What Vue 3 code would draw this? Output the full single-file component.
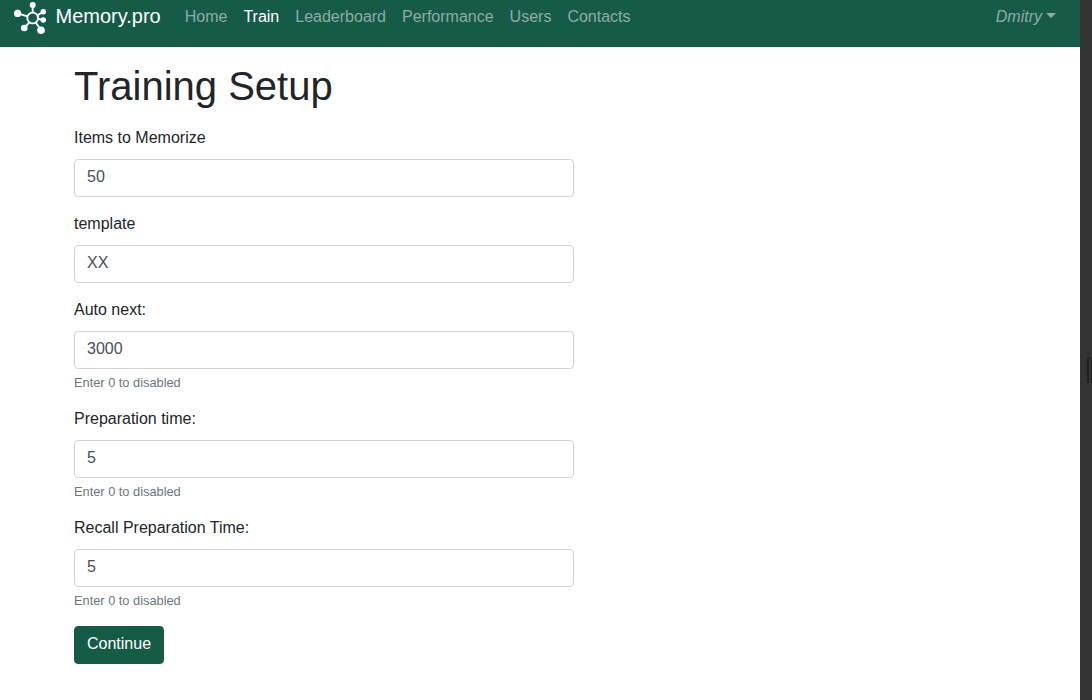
<script setup>
import { ref } from 'vue'

const links = ['Home', 'Train', 'Leaderboard', 'Performance', 'Users', 'Contacts']
const active = 'Train'
const fields = ref([
  { id: 'items', label: 'Items to Memorize', value: '50' },
  { id: 'template', label: 'template', value: 'XX' },
  { id: 'auto', label: 'Auto next:', value: '3000', help: 'Enter 0 to disabled' },
  { id: 'prep', label: 'Preparation time:', value: '5', help: 'Enter 0 to disabled' },
  { id: 'recall', label: 'Recall Preparation Time:', value: '5', help: 'Enter 0 to disabled' },
])
</script>

<template>
  <div class="window">
    <div class="page">
      <nav class="navbar">
        <a class="brand">
          <svg class="logo" width="34" height="34" viewBox="0 0 34 34" fill="none" stroke="#fff" stroke-width="1.9">
            <circle cx="19.7" cy="17" r="5.4" stroke-width="1.9" />
            <path d="M19.7 11.5V4M14.5 15.3L4.6 12.3M24.6 14.2L30.3 10.7M25.1 17.8L30.3 19M16.3 21.3L11.3 27M22.8 21.5L28 29.3" />
            <g fill="#fff" stroke="none">
              <circle cx="19.7" cy="4" r="3" />
              <circle cx="4.6" cy="12.4" r="3.6" />
              <circle cx="30.3" cy="10.7" r="2.7" />
              <circle cx="30.3" cy="19" r="2.7" />
              <circle cx="11.3" cy="27" r="3.3" />
              <circle cx="28" cy="29.2" r="3.8" />
            </g>
          </svg>
          <span>Memory.pro</span>
        </a>
        <a v-for="l in links" :key="l" class="link" :class="{ active: l === active }">{{ l }}</a>
        <a class="link user"><em>Dmitry</em><i class="caret"></i></a>
      </nav>
      <main class="content">
        <h1>Training Setup</h1>
        <form @submit.prevent>
          <div v-for="f in fields" :key="f.id" class="group">
            <label :for="f.id">{{ f.label }}</label>
            <input :id="f.id" v-model="f.value" type="text">
            <small v-if="f.help">{{ f.help }}</small>
          </div>
          <button type="submit">Continue</button>
        </form>
      </main>
    </div>
    <aside class="splitter"><span class="grip"></span></aside>
  </div>
</template>

<style>
body { margin: 0; overflow: hidden; }
</style>

<style scoped>
* { box-sizing: border-box; }
.window {
  display: flex;
  height: 700px;
  overflow: hidden;
  background: #fff;
  color: #212529;
  font: 16px/24px "Liberation Sans", Arial, sans-serif;
}
.page { flex: 1; min-width: 0; }
.navbar {
  display: flex;
  align-items: flex-start;
  height: 47px;
  padding: 0 16px 0 13px;
  background: #165b48;
}
.brand {
  display: flex;
  height: 34px;
  margin-right: 16px;
  color: #fff;
  font-size: 20px;
  line-height: 32px;
}
.logo { display: block; margin: 1px 8.5px 0 0; flex: none; }
.link { padding: 5px 8px 0; color: rgba(255, 255, 255, 0.5); white-space: nowrap; }
.link.active { color: #fff; }
.user { margin-left: auto; }
.caret {
  display: inline-block;
  margin-left: 4px;
  vertical-align: 4px;
  border-top: 5px solid currentColor;
  border-left: 5px solid transparent;
  border-right: 5px solid transparent;
}
.content { padding: 15px 0 0 74px; }
h1 { margin: 0 0 16px; font-size: 40px; font-weight: 400; line-height: 48px; }
form { width: 500px; }
.group { margin-bottom: 15px; }
label { display: block; margin-bottom: 9px; }
input {
  display: block;
  width: 100%;
  height: 38px;
  margin: 0;
  padding: 5px 12px 7px;
  border: 1px solid #ced4da;
  border-radius: 4px;
  background: #fff;
  color: #495057;
  font: inherit;
}
small { display: block; margin-top: 4px; color: #6c757d; font-size: 12.8px; line-height: 19px; }
.group:last-of-type { margin-bottom: 16px; }
button {
  display: block;
  height: 38px;
  padding: 5px 12px 7px;
  border: 1px solid #165b48;
  border-radius: 4px;
  background: #165b48;
  color: #fff;
  font: inherit;
}
.splitter {
  display: flex;
  justify-content: flex-end;
  width: 12px;
  padding-top: 357px;
  background: #333;
}
.grip {
  width: 5px;
  height: 26px;
  border: solid #202020;
  border-width: 0 1px 0 2px;
}
</style>
